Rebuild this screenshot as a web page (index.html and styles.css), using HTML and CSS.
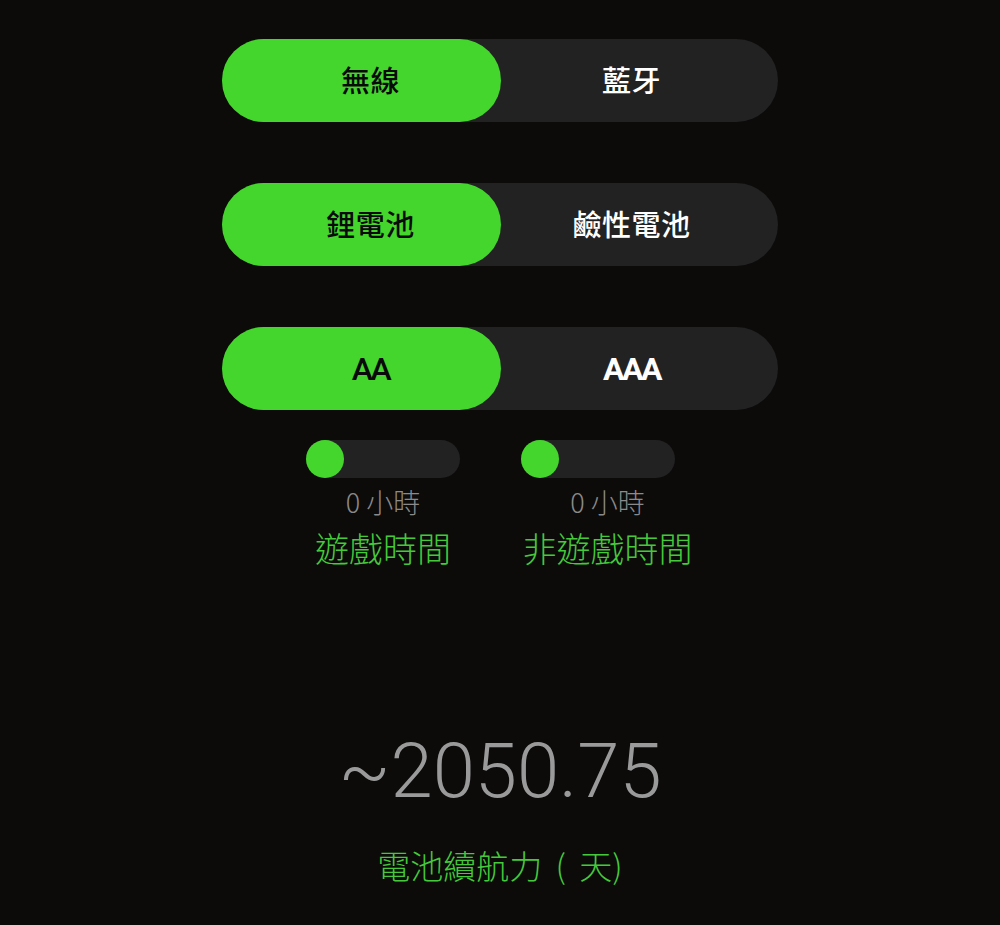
FILE: index.html
```html
<!DOCTYPE html>
<html lang="zh-Hant">
<head>
<meta charset="utf-8">
<link rel="stylesheet" href="styles.css">
</head>
<body>
<main class="app">
  <div class="seg">
    <div class="seg-opt active">無線</div>
    <div class="seg-opt">藍牙</div>
  </div>
  <div class="seg">
    <div class="seg-opt active">鋰電池</div>
    <div class="seg-opt">鹼性電池</div>
  </div>
  <div class="seg">
    <div class="seg-opt active latin">AA</div>
    <div class="seg-opt latin">AAA</div>
  </div>
  <div class="sliders">
    <div class="slider-col">
      <div class="track"><span class="knob"></span></div>
      <div class="hours">0 小時</div>
      <div class="slider-label">遊戲時間</div>
    </div>
    <div class="slider-col wide">
      <div class="track"><span class="knob"></span></div>
      <div class="hours">0 小時</div>
      <div class="slider-label">非遊戲時間</div>
    </div>
  </div>
  <div class="result">~2050.75</div>
  <div class="result-label">電池續航力 ( 天)</div>
</main>
</body>
</html>
```
FILE: styles.css
```css
html, body {
  margin: 0;
  padding: 0;
  background: #0d0a0a;
}
body {
  font-family: "Noto Sans CJK TC", "Noto Sans", sans-serif;
}
.app {
  width: 556px;
  margin: 0 auto;
  padding-top: 39px;
  display: flex;
  flex-direction: column;
  align-items: center;
}
.seg {
  width: 556px;
  height: 83px;
  border-radius: 42px;
  background: #222222;
  display: flex;
  margin-bottom: 61px;
}
.seg:nth-child(3) {
  margin-bottom: 30px;
}
.seg-opt {
  flex: 1;
  display: flex;
  align-items: center;
  justify-content: center;
  padding-bottom: 3px;
  font-size: 29px;
  font-weight: 500;
  letter-spacing: 0.5px;
  color: #ffffff;
  border-radius: 42px;
}
.seg-opt:first-child {
  padding-left: 18px;
}
.seg-opt:last-child {
  padding-right: 16px;
}
.seg-opt.active {
  background: #44d62c;
  color: #0a0a0a;
}
.seg-opt.latin {
  font-family: Roboto, "Liberation Sans", sans-serif;
  font-size: 32px;
  font-weight: 500;
  letter-spacing: -2.5px;
  padding-bottom: 0;
}
.seg-opt.latin:not(.active) {
  font-weight: 700;
}
.sliders {
  display: flex;
  gap: 61px;
  width: 388px;
}
.slider-col {
  width: 154px;
  display: flex;
  flex-direction: column;
  align-items: center;
}
.slider-col.wide {
  width: 173px;
}
.track {
  align-self: flex-start;
  width: 154px;
  height: 38px;
  border-radius: 19px;
  background: #222222;
  display: flex;
}
.knob {
  width: 38px;
  height: 38px;
  border-radius: 50%;
  background: #44d62c;
}
.hours {
  margin-top: 9px;
  line-height: 30px;
  font-size: 27px;
  font-weight: 300;
  color: #8a8a8a;
  white-space: nowrap;
}
.slider-label {
  margin-top: 9px;
  line-height: 44px;
  font-size: 34px;
  font-weight: 300;
  color: #44c93a;
  white-space: nowrap;
}
.result {
  margin-top: 156px;
  line-height: 90px;
  font-family: Roboto, "Noto Sans", sans-serif;
  font-weight: 300;
  font-size: 76px;
  color: #9a9a9a;
}
.result-label {
  margin-top: 27px;
  line-height: 44px;
  font-size: 33px;
  font-weight: 300;
  word-spacing: 6px;
  color: #44c93a;
  white-space: nowrap;
}
```
